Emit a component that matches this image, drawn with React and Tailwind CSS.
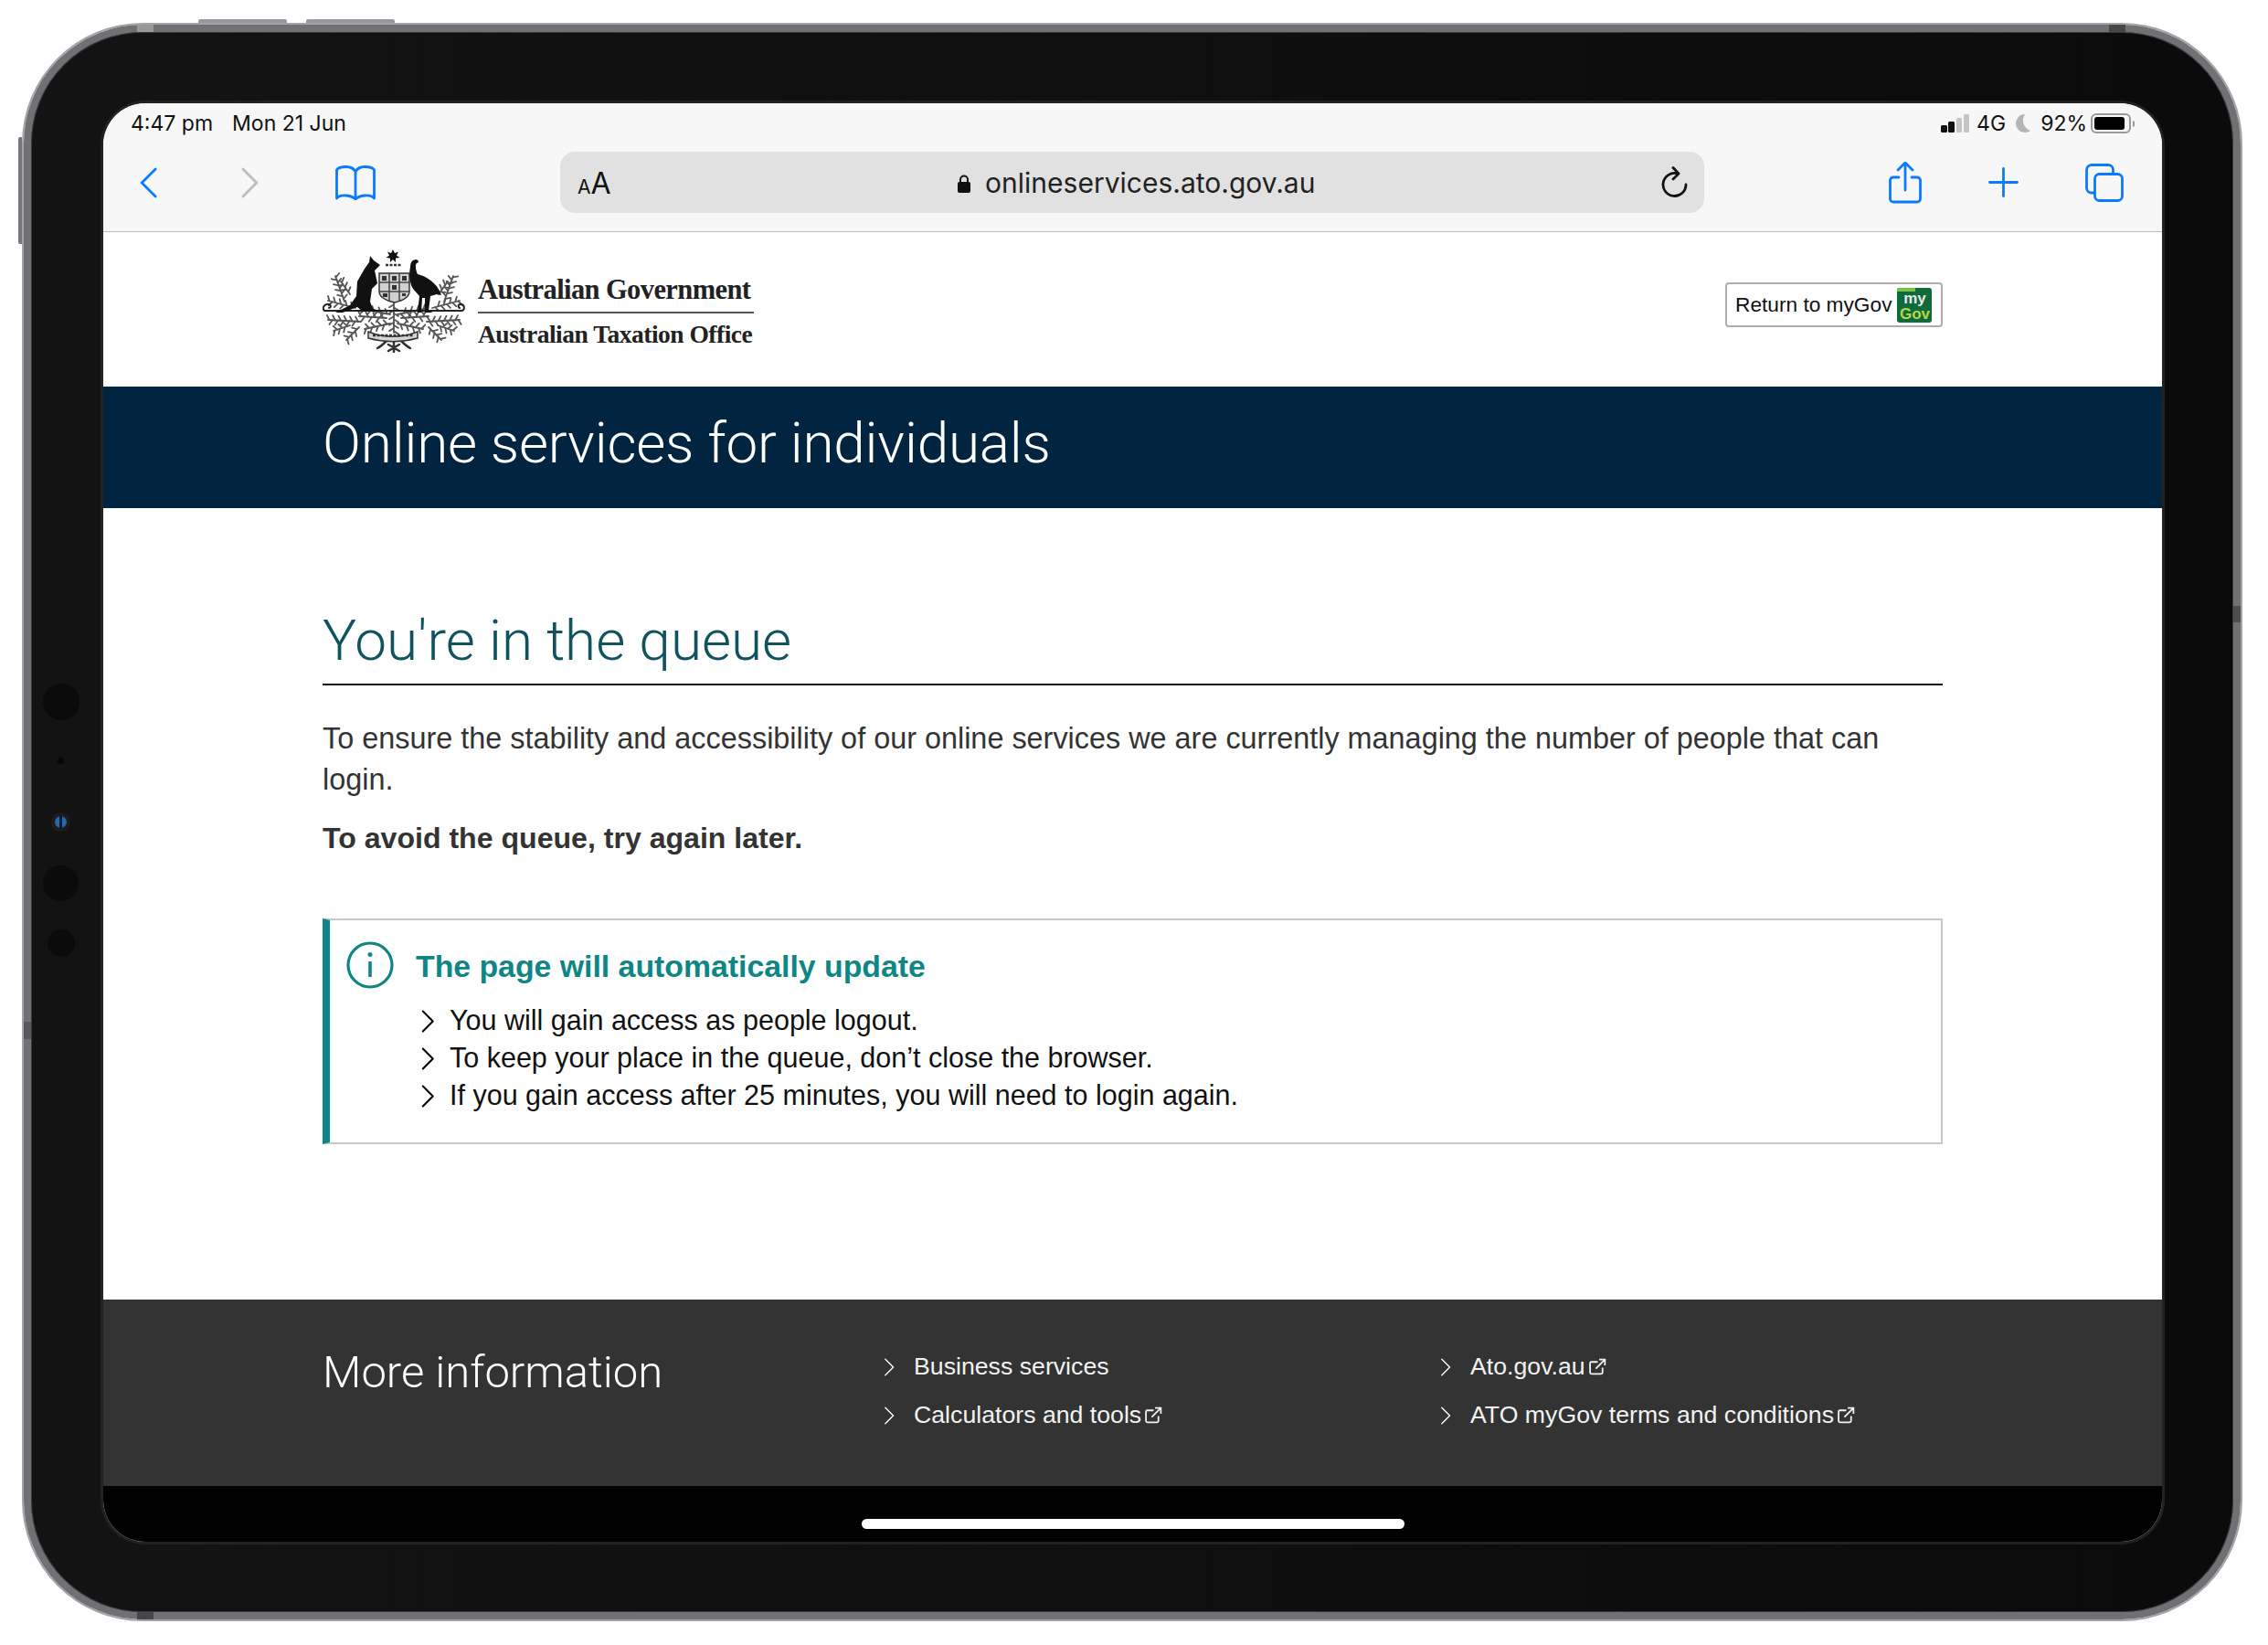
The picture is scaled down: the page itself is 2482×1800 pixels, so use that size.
import React from "react";

const blue = "#0a7aff";

// branches of the crest foliage: x0, y0, x1, y1, number of leaves
const branches = [
  [24, 58, 14, 30, 9],
  [133, 58, 143, 30, 9],
  [30, 50, 20, 36, 5],
  [127, 50, 137, 36, 5],
  [36, 65, 6, 57, 9],
  [120, 65, 150, 57, 9],
  [74, 72, 44, 66, 8],
  [82, 72, 112, 66, 8],
  [42, 80, 6, 78, 11],
  [114, 80, 150, 78, 11],
  [70, 76, 40, 74, 7],
  [86, 76, 116, 74, 7],
  [74, 82, 46, 88, 8],
  [82, 82, 110, 88, 8],
  [40, 86, 26, 100, 6],
  [116, 86, 130, 100, 6],
  [30, 84, 12, 90, 6],
  [126, 84, 144, 90, 6],
  [78, 58, 78, 92, 10],
];

function Leaves() {
  const lines = [];
  branches.forEach(([x0, y0, x1, y1, n], b) => {
    const dx = x1 - x0;
    const dy = y1 - y0;
    const len = Math.hypot(dx, dy);
    lines.push(<path key={`b${b}`} d={`M${x0} ${y0}L${x1} ${y1}`} />);
    for (let i = 1; i <= n; i++) {
      const t = i / (n + 0.5);
      const x = x0 + dx * t;
      const y = y0 + dy * t;
      const side = i % 2 ? 1 : -1;
      const ex = x + (dx / len) * 3 + (-dy / len) * 5 * side;
      const ey = y + (dy / len) * 3 + (dx / len) * 5 * side;
      lines.push(<path key={`l${b}-${i}`} d={`M${x} ${y}L${ex} ${ey}`} />);
    }
  });
  return lines;
}

function Chevron({ className = "", color = "currentColor", width = 2 }) {
  return (
    <svg viewBox="0 0 14 24" className={className} fill="none" stroke={color} strokeWidth={width} strokeLinecap="round" strokeLinejoin="round">
      <path d="M2 1.5 12.5 12 2 22.5" />
    </svg>
  );
}

function ExternalIcon() {
  return (
    <svg viewBox="0 0 20 20" className="ml-[3px] h-[21px] w-[21px] shrink-0" fill="none" stroke="#f2f2f2" strokeWidth="1.700">
      <path d="M15 11v5a1.500 1.500 0 0 1-1.500 1.500h-10A1.500 1.500 0 0 1 2 16V6.500A1.500 1.500 0 0 1 3.500 5H10" />
      <path d="M8 12 17 3M11.500 2.500H17.500V8.500" />
    </svg>
  );
}

function Crest() {
  return (
    <svg viewBox="0 0 156 114" className="h-[114px] w-[156px] shrink-0 blur-[0.6px]">
      {/* star and crest */}
      <path d="M77 1l2 4 4-1.500-2 4 3.500 2.500-4.500.5L80 15l-3-3-3 3 0-4.500L69.500 10l3.500-2.500-2-4 4 1.500z" fill="#111" />
      <path d="M69 18h17" stroke="#333" strokeWidth="2.500" strokeDasharray="3 1.500" />
      <g fill="none" stroke="#555" strokeWidth="1.800" strokeLinecap="round">
        <Leaves />
        <path d="M2 68h150c4 0 4-7-1-7-3 0-3 3-1 4M2 68c-3-3 0-8 5-7 3 1 2 4 0 4" strokeWidth="2" stroke="#222" />
        <path d="M70 101c-4 4-6 6-10 8M86 101c4 4 6 6 10 8M78 99v14M72 105l12 7M84 105l-12 7" strokeWidth="2.500" stroke="#333" />
      </g>
      {/* shield */}
      <path d="M62 27h33v20c0 6-8 10-16 12-9-2-17-6-17-12z" fill="#d0d0d0" stroke="#333" strokeWidth="1.500" />
      <path d="M62 37h33M62 47h33M73 27v30M84 27v30" stroke="#444" strokeWidth="1.500" />
      <path d="M65 30h5v5h-5zM87 30h5v5h-5zM76 40h5v5h-5zM66 49h5v4h-5zM87 49h4v3h-4zM76 30h5v5h-5z" fill="#333" />
      {/* kangaroo */}
      <path d="M52 8l4 5 7 5-3 3-3 3 3 14-6 6-2 14 3 8 9 2-20 1-6-5-16 6-8 0 16-8 7-10 1-16 8-14 5-7z" fill="#111" />
      {/* emu */}
      <path d="M99 13c3-2 6-1 6 2l-2 1c-2 1-1 8 1 12 8 2 21 8 26 23l-5-1-7 2-2 16 5 2-9 0 0-16-3 0-1 16-4 0 2-18-7-8c-5-8-4-19-3-24 0-3 1-6 3-7z" fill="#111" />
      <path d="M50 91c18 7 36 7 54 0l0 7c-18 5-36 5-54 0z" fill="#d4d4d4" stroke="#333" strokeWidth="1.500" />
      <path d="M55 95h44" stroke="#333" strokeWidth="2.500" strokeDasharray="3 1.500" />
    </svg>
  );
}

function StatusBar() {
  return (
    <div className="flex h-[44px] items-center justify-between pl-[30px] pr-[30px] font-['Inter',sans-serif] text-[23px] text-[#111]">
      <div className="flex gap-[21px]">
        <span>4:47 pm</span>
        <span>Mon 21 Jun</span>
      </div>
      <div className="flex items-center">
        <svg viewBox="0 0 32 20" className="h-[20px] w-[32px]">
          <rect x="0" y="12" width="7" height="8" rx="1.500" fill="#111" />
          <rect x="8" y="8" width="7" height="12" rx="1.500" fill="#111" />
          <rect x="17" y="4" width="6" height="16" rx="1.500" fill="#c4c4c4" />
          <rect x="25" y="0" width="6" height="20" rx="1.500" fill="#c4c4c4" />
        </svg>
        <span className="ml-[7px]">4G</span>
        <svg viewBox="0 0 18 22" className="ml-[10px] h-[22px] w-[18px]">
          <path d="M11 1A10 10 0 1 0 17 19 12 12 0 0 1 11 1z" fill="#b5b5b5" />
        </svg>
        <span className="ml-[10px]">92%</span>
        <div className="ml-[4px] h-[22px] w-[44px] rounded-[6px] border-[2px] border-[#9a9a9a] p-[2px]">
          <div className="h-full w-[92%] rounded-[3px] bg-black" />
        </div>
        <div className="ml-[2px] h-[7px] w-[2px] rounded-r-sm bg-[#9a9a9a]" />
      </div>
    </div>
  );
}

function Toolbar() {
  return (
    <div className="mb-[11px] flex h-[85px] items-center pl-[40px]">
      <Chevron className="h-[36px] w-[20px] rotate-180" color={blue} width={1.900} />
      <Chevron className="ml-[90px] h-[36px] w-[20px]" color="#bcbcbc" width={1.900} />
      <svg viewBox="0 0 44 38" className="ml-[84px] h-[38px] w-[44px]" fill="none" stroke={blue} strokeWidth="2.800" strokeLinejoin="round">
        <path d="M22 35V7c-2-4-6-5.500-10-5.500-4 0-9 .5-10.500 3.500v31c2-3 7-3.500 11-3 4 .5 7 1.500 9.500 4 2.500-2.500 5.500-3.500 9.500-4 4-.5 9 0 11 3V5C41 2 36 1.500 32 1.500 28 1.500 24 3 22 7" />
      </svg>
      <div className="ml-[202px] flex h-[67px] w-[1252px] items-center rounded-[16px] bg-[#e1e1e1] pl-[19px] pr-[17px] text-[#111]">
        <span className="pt-[2px] font-['Inter',sans-serif] leading-none"><span className="text-[21px]">A</span><span className="text-[32px]">A</span></span>
        <div className="flex flex-1 items-center justify-center pt-[2px] font-['Inter',sans-serif] text-[30px] text-[#222]">
          <svg viewBox="0 0 16 22" className="mr-[15px] h-[22px] w-[16px]">
            <path d="M4 10V6.500a4 4 0 0 1 8 0V10" fill="none" stroke="#111" strokeWidth="2" />
            <rect x="1" y="9" width="14" height="12" rx="2" fill="#111" />
          </svg>
          onlineservices.ato.gov.au
        </div>
        <svg viewBox="0 0 30 36" className="h-[36px] w-[30px]" fill="none" stroke="#111" strokeWidth="2.800" strokeLinecap="round" strokeLinejoin="round">
          <path d="M18 8A12.500 12.500 0 1 0 27 20" />
          <path d="M13 1.500 19 8l-6 6" />
        </svg>
      </div>
      <svg viewBox="0 0 36 46" className="ml-[202px] h-[46px] w-[36px]" fill="none" stroke={blue} strokeWidth="2.800" strokeLinecap="round" strokeLinejoin="round">
        <path d="M18 31V2M10 9l8-8 8 8" />
        <path d="M11 17H5a3.500 3.500 0 0 0-3.500 3.500v20A3.500 3.500 0 0 0 5 44h26a3.500 3.500 0 0 0 3.500-3.500v-20A3.500 3.500 0 0 0 31 17h-6" />
      </svg>
      <svg viewBox="0 0 33 33" className="ml-[73px] h-[33px] w-[33px]" fill="none" stroke={blue} strokeWidth="2.800" strokeLinecap="round">
        <path d="M16.500 1.500v30M1.500 16.500h30" />
      </svg>
      <svg viewBox="0 0 42 42" className="ml-[73px] h-[42px] w-[42px]" fill="none" stroke={blue} strokeWidth="2.800" strokeLinejoin="round">
        <rect x="10.500" y="11.500" width="30" height="29" rx="5" />
        <path d="M10.500 32H7a5.500 5.500 0 0 1-5.500-5.500V7A5.500 5.500 0 0 1 7 1.500h18A5.500 5.500 0 0 1 30.500 7v4.500" />
      </svg>
    </div>
  );
}

function MyGovBadge() {
  return (
    <div className="relative flex h-[38px] w-[38px] shrink-0 flex-col items-center justify-center rounded-[3px] bg-[#0e6b3a] pt-[3px] font-['Liberation_Sans',sans-serif] text-[17px] font-bold leading-[17px]">
      <div className="absolute left-0 top-0 h-[4px] w-[20px] rounded-tl-[3px] bg-[#7ac143]" />
      <span className="text-[#e8e8e8]">my</span>
      <span className="text-[#b9d544]">Gov</span>
    </div>
  );
}

function Bullet({ children }) {
  return (
    <li className="flex h-[41px] items-center">
      <Chevron className="mr-[16px] h-[25px] w-[16px] text-black" width={2} />
      {children}
    </li>
  );
}

function FooterLink({ children, external }) {
  return (
    <li className="flex h-[53px] items-center">
      <Chevron className="mr-[21px] h-[20px] w-[12px] text-white" width={1.600} />
      <span>{children}</span>
      {external && <ExternalIcon />}
    </li>
  );
}

export default function App() {
  return (
    <div className="h-[1800px] w-[2482px] overflow-hidden bg-white pl-[26px] pt-[27px] font-['Liberation_Sans',sans-serif]">
      <div className="relative h-[1745px] w-[2426px] rounded-[130px] border-[8px] border-[#717175] bg-linear-to-r from-[#131313] to-[#0b0b0b] pb-[77px] pl-[79px] pr-[78px] pt-[78px] shadow-[inset_0_0_0_1px_#3a3a3c,0_0_0_2px_#a4a4a8]">
        {/* hardware buttons */}
        <div className="absolute left-[183px] top-[-14px] h-[4px] w-[97px] rounded-t-[2px] bg-[#98989c]" />
        <div className="absolute left-[301px] top-[-14px] h-[4px] w-[97px] rounded-t-[2px] bg-[#98989c]" />
        <div className="absolute left-[-14px] top-[115px] h-[117px] w-[4px] rounded-l-[2px] bg-[#77777b]" />
        {/* antenna bands */}
        <div className="absolute left-[116px] top-[-8px] h-[8px] w-[18px] bg-[#99999c]" />
        <div className="absolute bottom-[-8px] left-[116px] h-[8px] w-[18px] bg-[#47474a]" />
        <div className="absolute right-[118px] top-[-8px] h-[8px] w-[18px] bg-[#47474a]" />
        <div className="absolute left-[-8px] top-[1083px] h-[19px] w-[8px] bg-[#58585c]" />
        <div className="absolute right-[-8px] top-[628px] h-[18px] w-[8px] bg-[#4e4e52]" />
        {/* cameras and sensors */}
        <div className="absolute left-[13px] top-[713px] h-[40px] w-[40px] rounded-full bg-[#0b0b0b]" />
        <div className="absolute left-[29px] top-[794px] h-[7px] w-[7px] rounded-full bg-[#070707]" />
        <div className="absolute left-[22px] top-[854px] flex h-[21px] w-[21px] items-center justify-center rounded-full bg-[#1c1c1e]">
          <div className="flex h-[13px] w-[13px] justify-center rounded-full bg-[#2468b0]">
            <div className="h-full w-[3px] bg-[#0b1a2c]" />
          </div>
        </div>
        <div className="absolute left-[13px] top-[912px] h-[39px] w-[39px] rounded-full bg-[#0b0b0b]" />
        <div className="absolute left-[18px] top-[982px] h-[30px] w-[30px] rounded-full bg-[#0b0b0b]" />

        <div className="flex h-full flex-col overflow-hidden rounded-[46px] bg-white shadow-[0_0_0_3px_#222]">
          <div className="border-b border-[#bcbcbc] bg-[#f7f7f7]">
            <StatusBar />
            <Toolbar />
          </div>

          <header className="flex h-[169px] shrink-0 items-start justify-between px-[240px] pt-[18px]">
            <div className="flex items-start">
              <Crest />
              <div className="ml-[14px] mt-[26px] w-[302px] font-['Liberation_Serif',serif] font-bold text-[#222]">
                <div className="h-[45px] whitespace-nowrap border-b-2 border-[#555] pt-[2px] text-[30.500px] leading-[34px] tracking-[-0.600px]">Australian Government</div>
                <div className="whitespace-nowrap pt-[6px] text-[27.500px] leading-[34px] tracking-[-0.500px]">Australian Taxation Office</div>
              </div>
            </div>
            <a className="mt-[37px] flex h-[49px] w-[238px] items-center gap-[6px] rounded-[4px] border-2 border-[#aeaeae] pl-[9px] text-[22.700px] text-[#111]">
              Return to myGov
              <MyGovBadge />
            </a>
          </header>

          <div className="flex h-[133px] shrink-0 items-center bg-[#012541] px-[240px] pb-[10px] font-['Roboto',sans-serif] text-[62px] font-light tracking-[-0.200px] text-white">
            Online services for individuals
          </div>

          <main className="flex-1 px-[240px] pt-[105px] text-[32.400px] text-[#333]">
            <h1 className="h-[89px] border-b-2 border-[#111] pt-[3px] font-['Roboto',sans-serif] text-[62px] font-light leading-[74px] text-[#10525e]">You're in the queue</h1>
            <p className="mt-[36px] leading-[45px]">
              To ensure the stability and accessibility of our online services we are currently managing the number of people that can login.
            </p>
            <p className="mt-[19px] text-[32.100px] font-bold leading-[45px]">To avoid the queue, try again later.</p>
            <section className="mt-[65px] h-[247px] border-2 border-l-[8px] border-[#c8c8c8] border-l-[#0e8686] pl-[18px] pt-[22px]">
              <div className="flex items-center">
                <svg viewBox="0 0 52 52" className="h-[52px] w-[52px]" fill="none" stroke="#0e8686" strokeWidth="3.200">
                  <circle cx="26" cy="26" r="24" />
                  <path d="M26 22v17" strokeWidth="3.600" />
                  <circle cx="26" cy="14.500" r="2.500" fill="#0e8686" stroke="none" />
                </svg>
                <h2 className="ml-[24px] mt-[3px] text-[33.800px] font-bold text-[#0e8686]">The page will automatically update</h2>
              </div>
              <ul className="ml-[81px] mt-[14px] text-[30.500px] text-[#111]">
                <Bullet>You will gain access as people logout.</Bullet>
                <Bullet>To keep your place in the queue, don’t close the browser.</Bullet>
                <Bullet>If you gain access after 25 minutes, you will need to login again.</Bullet>
              </ul>
            </section>
          </main>

          <footer className="flex h-[204px] shrink-0 bg-[#333] pl-[240px] pt-[47px] text-[26.700px] text-[#f2f2f2]">
            <div className="w-[614px] pt-[3px] font-['Roboto',sans-serif] text-[49px] font-light leading-[60px] text-white">More information</div>
            <ul className="w-[609px]">
              <FooterLink>Business services</FooterLink>
              <FooterLink external>Calculators and tools</FooterLink>
            </ul>
            <ul>
              <FooterLink external>Ato.gov.au</FooterLink>
              <FooterLink external>ATO myGov terms and conditions</FooterLink>
            </ul>
          </footer>

          <div className="flex h-[61px] shrink-0 justify-center bg-black pt-[36px]">
            <div className="h-[11px] w-[594px] rounded-full bg-white" />
          </div>
        </div>
      </div>
    </div>
  );
}
